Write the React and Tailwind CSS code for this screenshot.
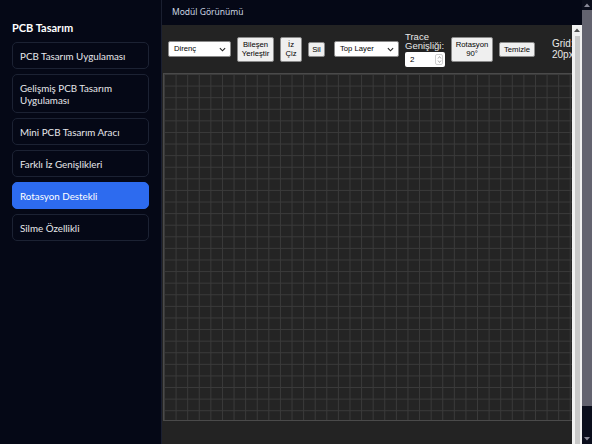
import React from 'react';

const menu = [
    { label: 'PCB Tasarım Uygulaması' },
    { label: 'Gelişmiş PCB Tasarım Uygulaması', tall: true },
    { label: 'Mini PCB Tasarım Aracı' },
    { label: 'Farklı İz Genişlikleri' },
    { label: 'Rotasyon Destekli', active: true },
    { label: 'Silme Özellikli' },
];

const Chevron = () => (
    <svg width="7" height="5" viewBox="0 0 8 5" fill="none" stroke="#222" strokeWidth="1.3">
        <path d="M1 1l3 3 3-3" />
    </svg>
);

const FakeSelect = ({ label, width }) => (
    <div className={`${width} flex h-[16px] shrink-0 items-center justify-between rounded-[2px] border border-[#8a8a8a] bg-white pl-[5px] pr-[4px] text-[7.7px] text-black`}>
        <span>{label}</span>
        <Chevron />
    </div>
);

const Btn = ({ children, className = '' }) => (
    <div className={`flex shrink-0 flex-col items-center justify-center rounded-[2px] border border-[#8a8a8a] bg-[#efefef] text-center text-[7.7px] leading-[9px] text-black ${className}`}>
        {children}
    </div>
);

const Sidebar = () => (
    <aside
        className="flex w-[162px] shrink-0 flex-col border-r border-[#1a1f30] bg-[#050816] px-[12px] pt-[21px]"
        style={{ fontFamily: 'Lato, "Noto Sans", sans-serif' }}
    >
        <h2 className="mb-[7px] text-[11px] leading-[14px] font-bold text-white">PCB Tasarım</h2>
        <nav className="flex flex-col gap-[5px]">
            {menu.map((item) => (
                <div
                    key={item.label}
                    className={`flex items-center rounded-[5px] border px-[7px] text-[9.8px] leading-[12px] ${item.tall ? 'h-[39px]' : 'h-[27px]'} ${item.active ? 'border-[#2d6bef] bg-[#2d6bef] text-white' : 'border-[#1c2233] text-[#e5e7eb]'}`}
                >
                    {item.label}
                </div>
            ))}
        </nav>
    </aside>
);

const Toolbar = () => (
    <div
        className="flex h-[48px] shrink-0 items-center pl-[6px]"
        style={{ fontFamily: '"Liberation Sans", Arial, sans-serif' }}
    >
        <FakeSelect label="Direnç" width="w-[63px]" />
        <Btn className="ml-[6px] h-[25px] w-[37px]">
            <span>Bileşen</span>
            <span>Yerleştir</span>
        </Btn>
        <Btn className="ml-[6px] h-[25px] w-[22px]">
            <span>İz</span>
            <span>Çiz</span>
        </Btn>
        <Btn className="ml-[6px] h-[15px] w-[17px]">Sil</Btn>
        <div className="ml-[9px]">
            <FakeSelect label="Top Layer" width="w-[65px]" />
        </div>
        <div className="ml-[6px] flex w-[40px] shrink-0 flex-col pt-[1px]">
            <span className="text-[9.5px] leading-[9.5px] text-[#e8e8e8]">Trace</span>
            <span className="text-[9.5px] leading-[10px] whitespace-nowrap text-[#e8e8e8]">Genişliği:</span>
            <div className="mt-[1px] flex h-[15px] w-[40px] items-center justify-between rounded-[2px] bg-white pl-[5px] pr-[2px] text-[8px] text-black">
                <span>2</span>
                <div className="flex h-[11px] w-[8px] flex-col items-center justify-center rounded-[2px] border border-[#cfcfcf]">
                    <svg width="5" height="9" viewBox="0 0 5 9" fill="none" stroke="#999" strokeWidth="0.8">
                        <path d="M1 3.5l1.5-2 1.5 2M1 5.5l1.5 2 1.5-2" />
                    </svg>
                </div>
            </div>
        </div>
        <Btn className="ml-[6px] h-[25px] w-[42px]">
            <span>Rotasyon</span>
            <span>90°</span>
        </Btn>
        <Btn className="ml-[6px] h-[15px] w-[36px]">Temizle</Btn>
        <div className="ml-[17px] flex shrink-0 flex-col text-[10px] leading-[11px] text-[#e8e8e8]">
            <span>Grid:</span>
            <span>20px</span>
        </div>
    </div>
);

const App = () => {
    return (
        <div
            className="flex h-[444px] w-full overflow-hidden bg-[#050816]"
            style={{ fontFamily: '"Noto Sans", "Open Sans", sans-serif' }}
        >
            <Sidebar />

            <main className="flex min-w-0 flex-1 flex-col">
                <header className="flex h-[25px] shrink-0 items-center bg-[#050816] px-[10px] text-[8.5px] text-[#cbd5e1]">
                    Modül Görünümü
                </header>

                <div className="flex min-h-0 flex-1">
                    <div className="flex min-w-0 flex-1 flex-col overflow-hidden bg-[#232323]">
                        <Toolbar />
                        <div className="ml-px h-[348px] w-[464px] shrink-0 border border-[#4a4a4a] bg-[#242424] bg-[linear-gradient(to_right,#3a3a3a_1px,transparent_1px),linear-gradient(to_bottom,#3a3a3a_1px,transparent_1px)] bg-[size:11.6px_11.6px]" />
                    </div>

                    {/* inner frame scrollbar */}
                    <div className="flex w-[10px] shrink-0 flex-col items-center bg-[#f1f1f1]">
                        <div className="flex h-[10px] items-center justify-center">
                            <svg width="6" height="4" viewBox="0 0 6 4" fill="#505050">
                                <path d="M0 4l3-3.5L6 4z" />
                            </svg>
                        </div>
                        <div className="mt-[1px] w-[5px] flex-1 bg-[#c8c8c8]" />
                    </div>
                </div>
            </main>

            {/* page scrollbar */}
            <div className="flex w-[10px] shrink-0 flex-col items-center bg-[#0b0e1c]">
                <div className="flex h-[10px] items-center justify-center">
                    <svg width="6" height="4" viewBox="0 0 6 4" fill="#8a8a98">
                        <path d="M0 4l3-3.5L6 4z" />
                    </svg>
                </div>
                <div className="h-[396px] w-full bg-[#63636f]" />
                <div className="flex-1" />
                <div className="flex h-[10px] items-center justify-center">
                    <svg width="6" height="4" viewBox="0 0 6 4" fill="#8a8a98">
                        <path d="M0 0l3 3.5L6 0z" />
                    </svg>
                </div>
            </div>
        </div>
    );
};

export default App;
